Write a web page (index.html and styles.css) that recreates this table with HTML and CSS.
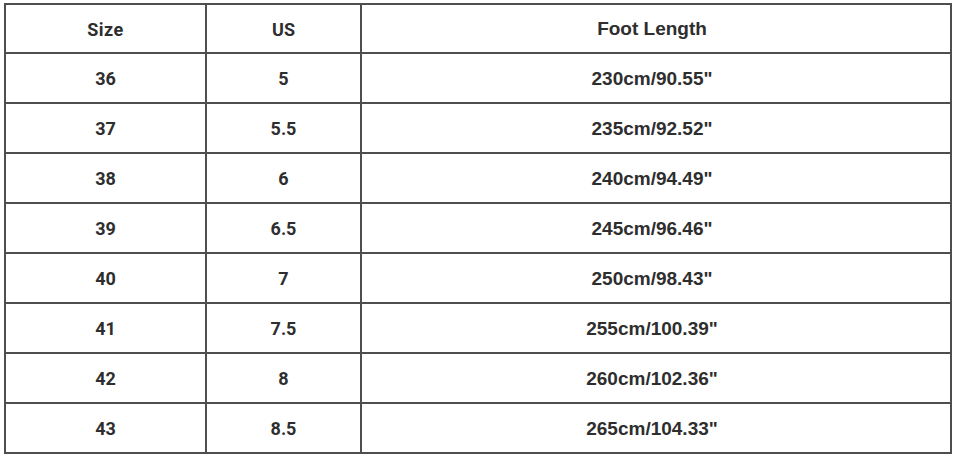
FILE: index.html
```html
<!DOCTYPE html>
<html>
<head>
<meta charset="utf-8">
<link rel="stylesheet" href="styles.css">
</head>
<body>
<div class="chart">
  <div class="cell head c1">Size</div><div class="cell head c2">US</div><div class="cell head c3">Foot Length</div>
  <div class="cell c1">36</div><div class="cell c2">5</div><div class="cell c3">230cm/90.55"</div>
  <div class="cell c1">37</div><div class="cell c2">5.5</div><div class="cell c3">235cm/92.52"</div>
  <div class="cell c1">38</div><div class="cell c2">6</div><div class="cell c3">240cm/94.49"</div>
  <div class="cell c1">39</div><div class="cell c2">6.5</div><div class="cell c3">245cm/96.46"</div>
  <div class="cell c1">40</div><div class="cell c2">7</div><div class="cell c3">250cm/98.43"</div>
  <div class="cell c1">41</div><div class="cell c2">7.5</div><div class="cell c3">255cm/100.39"</div>
  <div class="cell c1">42</div><div class="cell c2">8</div><div class="cell c3">260cm/102.36"</div>
  <div class="cell c1">43</div><div class="cell c2">8.5</div><div class="cell c3">265cm/104.33"</div>
</div>
</body>
</html>
```
FILE: styles.css
```css
html, body {
  margin: 0;
  padding: 0;
  background: #ffffff;
}
body {
  padding: 3px 0 0 4px;
}
.chart {
  display: grid;
  grid-template-columns: 201px 155px 590px;
  grid-template-rows: 49px repeat(8, 50px);
  border-left: 2px solid #4e4e4e;
  border-top: 2px solid #4e4e4e;
  width: max-content;
}
.cell {
  box-sizing: border-box;
  border-right: 2px solid #4e4e4e;
  border-bottom: 2px solid #4e4e4e;
  display: flex;
  align-items: center;
  justify-content: center;
  color: #2e2e2e;
  font-weight: 700;
  font-size: 18px;
  padding-top: 1px;
}
.c1, .c2 {
  font-family: Roboto, "Liberation Sans", sans-serif;
}
.head.c1 {
  letter-spacing: 0.5px;
}
.c3 {
  font-family: "Liberation Sans", Arial, sans-serif;
  font-size: 19px;
  padding-right: 8px;
}
```
